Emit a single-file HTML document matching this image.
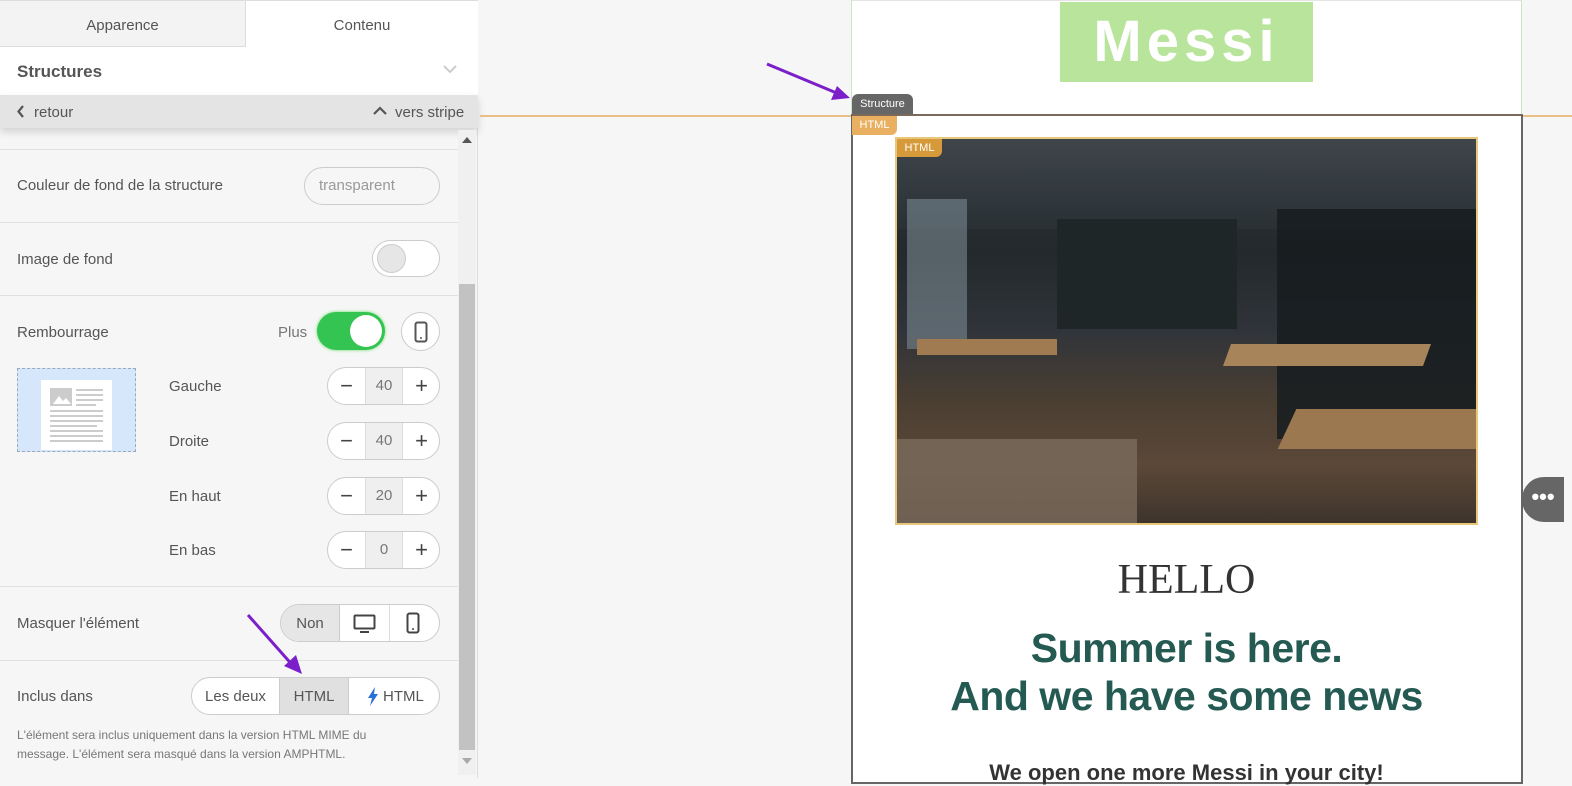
<!DOCTYPE html>
<html><head><meta charset="utf-8"><style>
*{box-sizing:border-box;margin:0;padding:0}
body{width:1572px;height:778px;overflow:hidden;background:#f6f6f6;font-family:"Liberation Sans",sans-serif;color:#555;position:relative}
.a{position:absolute}
.lbl{position:absolute;left:17px;font-size:15px;color:#555}
.hr{position:absolute;left:0;width:458px;height:1px;background:#e0e0e0}
.pill{position:absolute;border:1px solid #ccc;border-radius:20px;background:#fff;overflow:hidden}
.step{position:absolute;left:327px;width:113px;height:38px;border:1px solid #ccc;border-radius:19px;background:#fff;overflow:hidden;font-size:15px}
.step span{position:absolute;top:0;height:36px;line-height:36px;text-align:center}
.sub{position:absolute;left:169px;font-size:15px;color:#555}
</style></head><body>
<div class="a" style="left:0;top:0;width:478px;height:778px;background:#f6f6f6;border-right:1px solid #ddd"></div>
<div class="a" style="left:0;top:0;width:246px;height:47px;background:#f3f3f3;border:1px solid #ddd;border-left:none;text-align:center;line-height:50px;font-size:15px;color:#555">Apparence</div>
<div class="a" style="left:246px;top:0;width:232px;height:47px;background:#fff;text-align:center;line-height:50px;font-size:15px;color:#555;border-top:1px solid #ddd">Contenu</div>
<div class="a" style="left:0;top:47px;width:478px;height:48px;background:#fff"></div>
<div class="a" style="left:17px;top:62px;font-size:17px;font-weight:bold;color:#555">Structures</div>
<svg class="a" style="left:443px;top:64px" width="14" height="10"><path d="M1 2l6 6 6-6" stroke="#ccc" stroke-width="2" fill="none"/></svg>
<div class="a" style="left:0;top:95px;width:478px;height:33px;background:#e4e4e4;box-shadow:0 4px 8px rgba(0,0,0,.15)"></div>
<svg class="a" style="left:17px;top:105px" width="8" height="13"><path d="M6 1L1.5 6.5 6 12" stroke="#555" stroke-width="2.2" fill="none"/></svg>
<div class="a" style="left:34px;top:104px;font-size:15px;color:#555">retour</div>
<svg class="a" style="left:373px;top:106px" width="14" height="9"><path d="M1 8l6-6 6 6" stroke="#555" stroke-width="2.2" fill="none"/></svg>
<div class="a" style="left:395px;top:104px;font-size:15px;color:#555">vers stripe</div>
<div class="a" style="left:458px;top:130px;width:18px;height:645px;background:#f0f0f0"></div>
<div class="a" style="left:459px;top:284px;width:16px;height:466px;background:#c2c2c2"></div>
<svg class="a" style="left:462px;top:137px" width="10" height="6"><path d="M0 6L5 0 10 6z" fill="#555"/></svg>
<svg class="a" style="left:462px;top:758px" width="10" height="6"><path d="M0 0L5 6 10 0z" fill="#aaa"/></svg>
<div class="hr" style="top:149px"></div>
<div class="hr" style="top:222px"></div>
<div class="hr" style="top:295px"></div>
<div class="hr" style="top:586px"></div>
<div class="hr" style="top:660px"></div>
<div class="lbl" style="top:177px">Couleur de fond de la structure</div>
<div class="pill" style="left:304px;top:167px;width:136px;height:38px;background:#f6f6f6;color:#999;font-size:15px;line-height:36px;padding-left:14px">transparent</div>
<div class="lbl" style="top:251px">Image de fond</div>
<div class="pill" style="left:372px;top:240px;width:68px;height:37px"><div class="a" style="left:4px;top:3px;width:29px;height:29px;border-radius:50%;background:#e6e6e6;border:1px solid #ccc"></div></div>
<div class="lbl" style="top:324px">Rembourrage</div>
<div class="a" style="left:278px;top:324px;font-size:15px;color:#777">Plus</div>
<div class="a" style="left:317px;top:312px;width:68px;height:38px;border-radius:19px;background:#34c452;box-shadow:0 0 3px #6d6"><div class="a" style="left:33px;top:3px;width:32px;height:32px;border-radius:50%;background:#fff"></div></div>
<div class="pill" style="left:401px;top:312px;width:39px;height:39px"><svg class="a" style="left:12px;top:8px" width="14" height="22"><rect x="1.5" y="1.5" width="11" height="19" rx="2" stroke="#555" stroke-width="2" fill="none"/><circle cx="7" cy="17" r="1" fill="#555"/></svg></div>
<div class="a" style="left:17px;top:368px;width:119px;height:84px;background:#d6e7fb;border:1px dashed #9ab"></div>
<svg class="a" style="left:41px;top:380px" width="71" height="70"><rect width="71" height="70" fill="#fff"/><rect x="9" y="8" width="22" height="18" fill="#ccc"/><path d="M12 24l6-8 4 5 3-3 5 6z" fill="#fff"/><g stroke="#ccc" stroke-width="2"><path d="M35 10h27M35 15h27M35 20h27M35 25h20M9 31h53M9 36h53M9 41h53M9 46h47M9 51h53M9 56h53M9 61h53"/></g></svg>
<div class="sub" style="top:378px">Gauche</div>
<div class="sub" style="top:433px">Droite</div>
<div class="sub" style="top:488px">En haut</div>
<div class="sub" style="top:542px">En bas</div>
<div class="step" style="top:367px"><span style="left:0;width:37px;font-size:22px;color:#444">−</span><span style="left:37px;width:38px;background:#efefef;border-left:1px solid #ddd;border-right:1px solid #ddd;color:#777">40</span><span style="left:75px;width:37px;font-size:22px;color:#444">+</span></div>
<div class="step" style="top:422px"><span style="left:0;width:37px;font-size:22px;color:#444">−</span><span style="left:37px;width:38px;background:#efefef;border-left:1px solid #ddd;border-right:1px solid #ddd;color:#777">40</span><span style="left:75px;width:37px;font-size:22px;color:#444">+</span></div>
<div class="step" style="top:477px"><span style="left:0;width:37px;font-size:22px;color:#444">−</span><span style="left:37px;width:38px;background:#efefef;border-left:1px solid #ddd;border-right:1px solid #ddd;color:#777">20</span><span style="left:75px;width:37px;font-size:22px;color:#444">+</span></div>
<div class="step" style="top:531px"><span style="left:0;width:37px;font-size:22px;color:#444">−</span><span style="left:37px;width:38px;background:#efefef;border-left:1px solid #ddd;border-right:1px solid #ddd;color:#777">0</span><span style="left:75px;width:37px;font-size:22px;color:#444">+</span></div>
<div class="lbl" style="top:615px">Masquer l'élément</div>
<div class="pill" style="left:280px;top:604px;width:160px;height:38px">
<div class="a" style="left:0;top:0;width:59px;height:36px;background:#e6e6e6;border-right:1px solid #ccc;text-align:center;line-height:37px;font-size:15px;color:#555">Non</div>
<div class="a" style="left:108px;top:0;width:1px;height:36px;background:#ddd"></div>
<svg class="a" style="left:72px;top:9px" width="24" height="20"><rect x="1.5" y="1.5" width="20" height="13" rx="1" stroke="#444" stroke-width="2" fill="none"/><path d="M7 18h9" stroke="#444" stroke-width="2"/></svg>
<svg class="a" style="left:125px;top:7px" width="14" height="23"><rect x="1.5" y="1.5" width="11" height="19" rx="2" stroke="#444" stroke-width="2" fill="none"/><circle cx="7" cy="17" r="1" fill="#444"/></svg>
</div>
<div class="lbl" style="top:688px">Inclus dans</div>
<div class="pill" style="left:191px;top:677px;width:249px;height:38px;font-size:15px">
<div class="a" style="left:0;top:0;width:87px;height:36px;text-align:center;line-height:37px;color:#555">Les deux</div>
<div class="a" style="left:87px;top:0;width:70px;height:36px;background:#e0e0e0;border-left:1px solid #ccc;border-right:1px solid #ccc;text-align:center;line-height:37px;color:#555">HTML</div>
<svg class="a" style="left:175px;top:9px" width="12" height="19"><path d="M8 0L1 11h4l-2 8 8-12H7z" fill="#2a6fd6"/></svg>
<div class="a" style="left:191px;top:0;line-height:37px;color:#555">HTML</div>
</div>
<div class="a" style="left:17px;top:726px;font-size:12px;color:#777;line-height:19px;width:395px">L'élément sera inclus uniquement dans la version HTML MIME du message. L'élément sera masqué dans la version AMPHTML.</div>
<svg class="a" style="left:240px;top:610px" width="70" height="65"><path d="M8 5L55 58" stroke="#7a1fc9" stroke-width="3"/><path d="M62 64L44 56l12-11z" fill="#7a1fc9"/></svg>
<div class="a" style="left:851px;top:0;width:671px;height:114px;background:#fff;border-left:1px solid #cfe3c6;border-right:1px solid #cfe3c6;border-top:1px solid #e4e4e4"></div>
<div class="a" style="left:1060px;top:2px;width:253px;height:80px;background:#b8e59b;color:#fff;font-size:58px;font-weight:bold;text-align:center;line-height:80px;letter-spacing:5px">Messi</div>
<div class="a" style="left:480px;top:115px;width:1092px;height:2px;background:#e8bf85"></div>
<div class="a" style="left:851px;top:114px;width:672px;height:670px;background:#fff;border:2px solid #666;border-top-color:#7a6a5a"></div>
<div class="a" style="left:852px;top:94px;width:61px;height:20px;background:#666;border-radius:6px 6px 0 0;color:#fff;font-size:11px;line-height:21px;text-align:center">Structure</div>
<div class="a" style="left:852px;top:116px;width:45px;height:19px;background:#e8b060;color:#fff;font-size:11px;line-height:19px;text-align:center;border-radius:0 0 6px 0">HTML</div>
<svg class="a" style="left:764px;top:60px" width="90" height="42"><path d="M3 4L75 34" stroke="#7a1fc9" stroke-width="3"/><path d="M86 38L67 40l6-14z" fill="#7a1fc9"/></svg>
<div class="a" style="left:895px;top:137px;width:583px;height:388px;border:2px solid #e8c77a;overflow:hidden;background:linear-gradient(180deg,#2e3438 0%,#23292c 30%,#30343a 50%,#4a3e32 68%,#5b4838 85%,#3e342c 100%)">
<div class="a" style="left:0;top:0;width:583px;height:90px;background:linear-gradient(180deg,#434a50,#2a3236);opacity:.8"></div>
<div class="a" style="left:10px;top:60px;width:60px;height:150px;background:#8a9aa4;opacity:.5"></div>
<div class="a" style="left:160px;top:80px;width:180px;height:110px;background:#1e2628"></div>
<div class="a" style="left:380px;top:70px;width:200px;height:230px;background:#161c1f;opacity:.85"></div>
<div class="a" style="left:20px;top:200px;width:140px;height:16px;background:#a07a50"></div>
<div class="a" style="left:330px;top:205px;width:200px;height:22px;background:#a8845a;transform:skewX(-20deg)"></div>
<div class="a" style="left:390px;top:270px;width:200px;height:40px;background:#9c7850;transform:skewX(-25deg)"></div>
<div class="a" style="left:0;top:300px;width:240px;height:90px;background:#7a6c5c;opacity:.8"></div>
<div class="a" style="left:0;top:0;width:45px;height:18px;background:#d69a3a;color:#fff;font-size:11px;line-height:18px;text-align:center;border-radius:0 0 6px 0">HTML</div>
</div>
<div class="a" style="left:851px;top:556px;width:671px;text-align:center;font-family:'Liberation Serif',serif;font-size:42px;color:#333">HELLO</div>
<div class="a" style="left:851px;top:624px;width:671px;text-align:center;font-size:41px;font-weight:bold;color:#255a53;line-height:48px;letter-spacing:-0.5px">Summer is here.<br>And we have some news</div>
<div class="a" style="left:851px;top:760px;width:671px;text-align:center;font-size:22px;font-weight:bold;color:#333">We open one more Messi in your city!</div>
<div class="a" style="left:1522px;top:477px;width:42px;height:45px;background:#666;border-radius:22px 0 0 22px;color:#fff;font-size:22px;text-align:center;line-height:40px;font-weight:bold">•••</div>
</body></html>
